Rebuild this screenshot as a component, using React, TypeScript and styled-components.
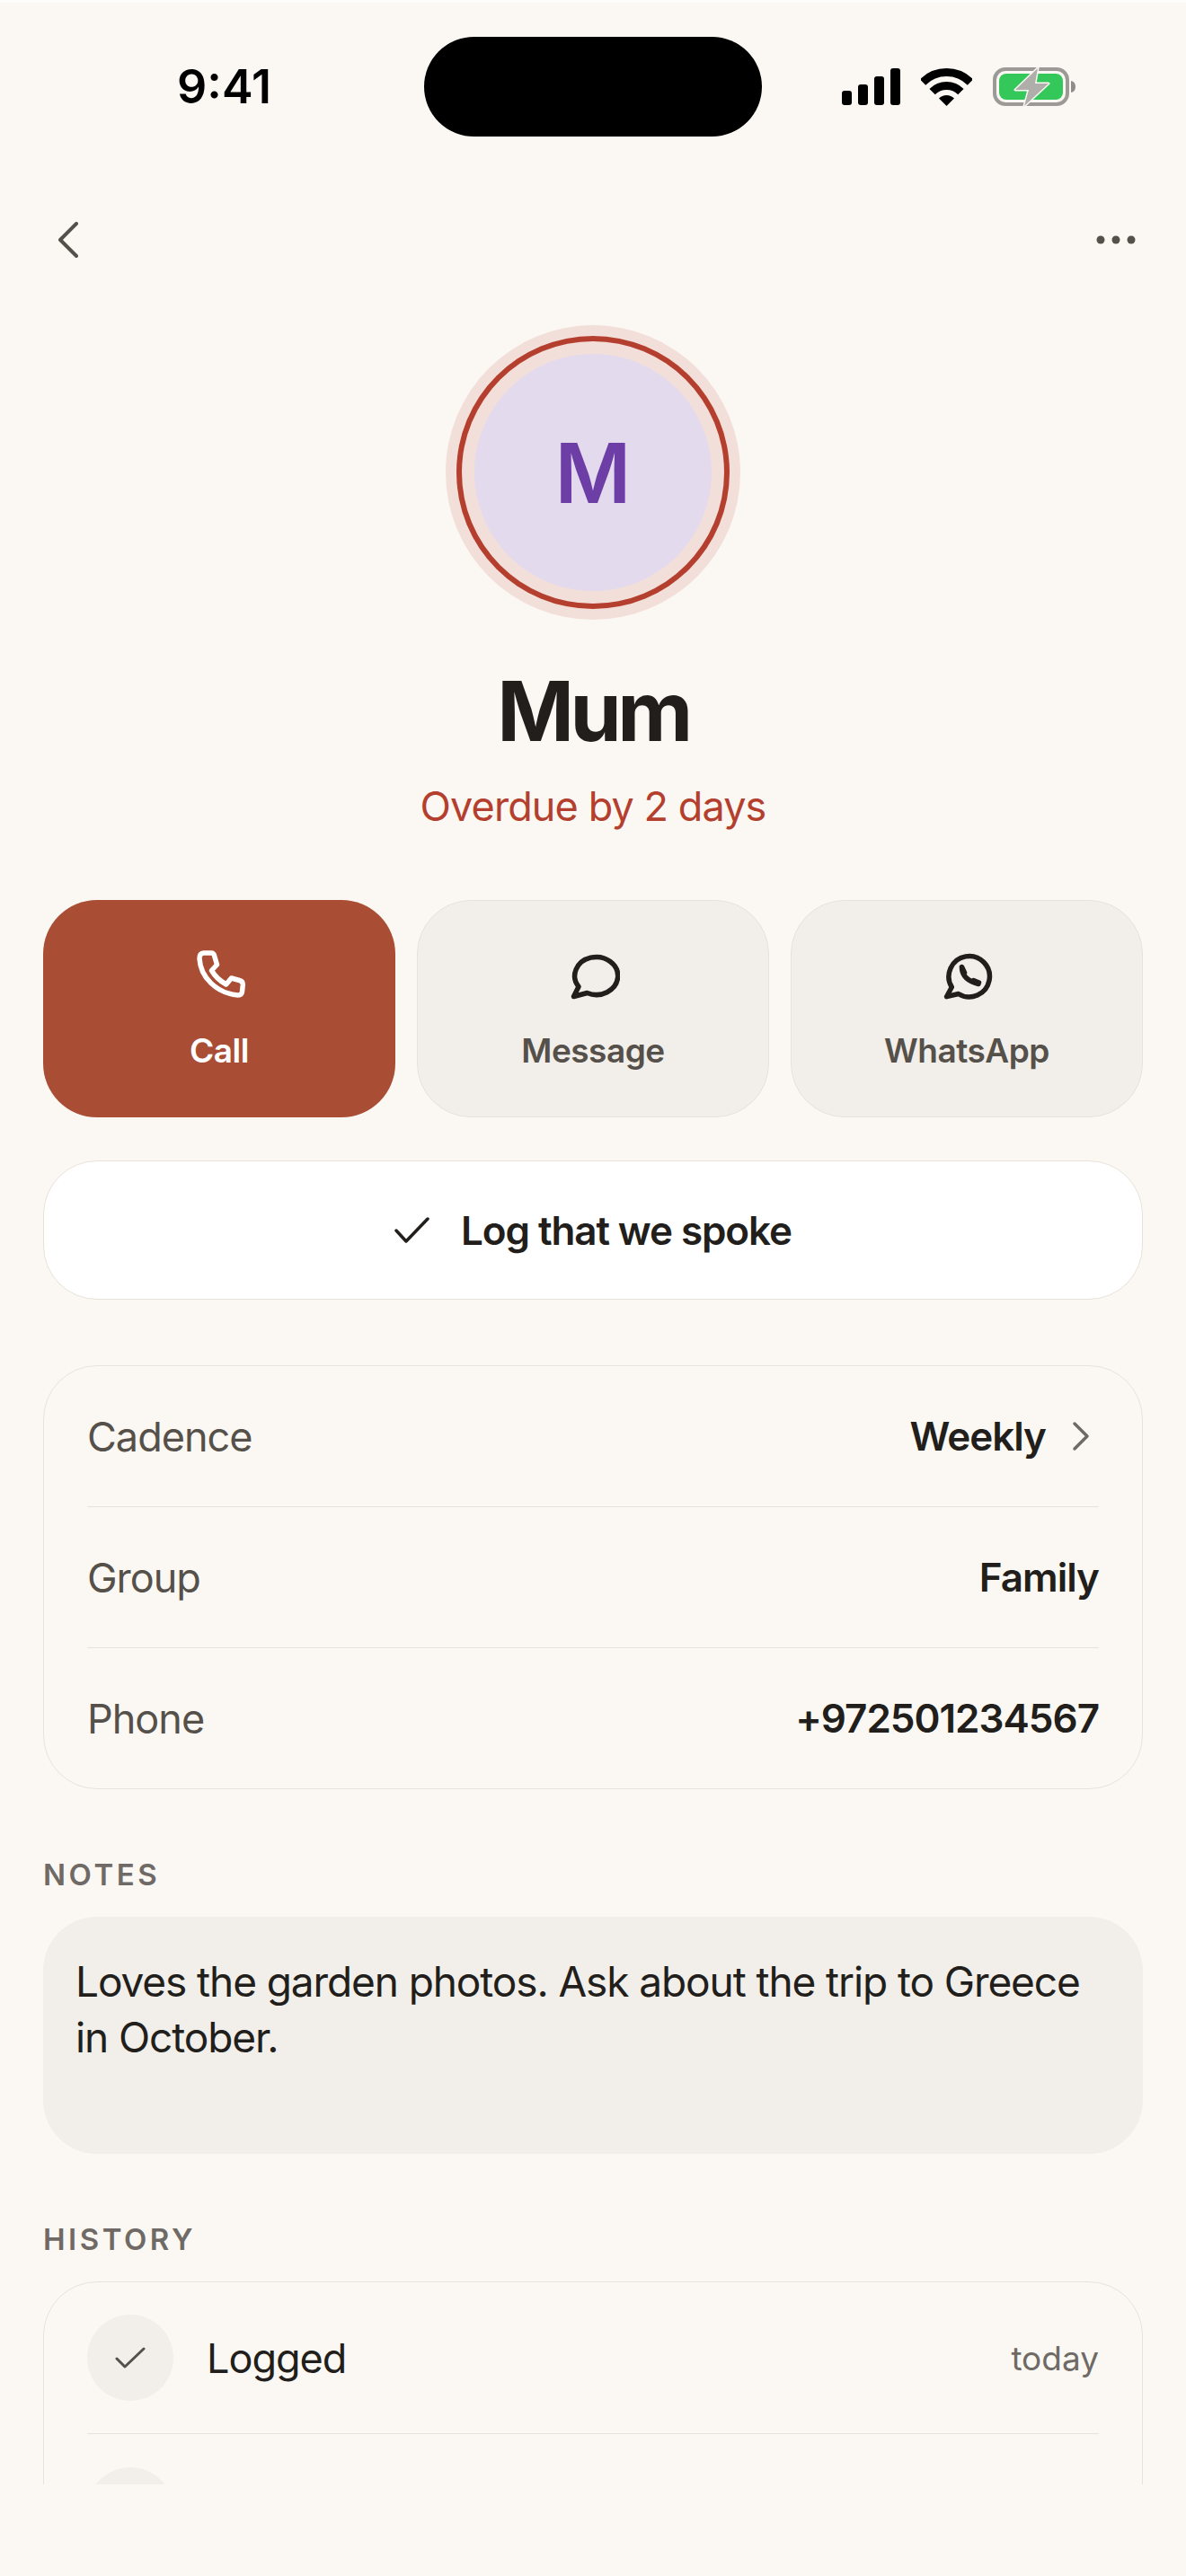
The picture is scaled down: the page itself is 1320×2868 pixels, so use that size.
import React from "react";
import styled, { createGlobalStyle } from "styled-components";

const GlobalStyle = createGlobalStyle`
  html, body {
    margin: 0;
    padding: 0;
    background: #fbf8f3;
  }
  * {
    box-sizing: border-box;
  }
`;

const colors = {
  ink: "#211e1b",
  soft: "#55504a",
  mute: "#6f6a65",
  line: "#e8e2da",
  fill: "#f2eee9",
  clay: "#a94e35",
  alert: "#b53f2e",
};

interface ActionProps {
  label: string;
  active?: boolean;
  children: React.ReactNode;
}

const Action = ({ label, active, children }: ActionProps): JSX.Element => (
  <ActionButton $active={active}>
    {children}
    <ActionLabel>{label}</ActionLabel>
  </ActionButton>
);

interface InfoRowProps {
  name: string;
  value: string;
  chevron?: boolean;
}

const InfoRow = ({ name, value, chevron }: InfoRowProps): JSX.Element => (
  <Row>
    <RowName>{name}</RowName>
    <RowValue>
      {value}
      {chevron && (
        <Chevron width="20" height="34" viewBox="0 0 20 34" fill="none">
          <polyline points="3,3 17,17 3,31" stroke={colors.mute} strokeWidth="3.5" strokeLinecap="round" strokeLinejoin="round" />
        </Chevron>
      )}
    </RowValue>
  </Row>
);

const App = (): JSX.Element => (
  <Page>
    <GlobalStyle />
    <Screen>
      <StatusBar>
        <Clock>9:41</Clock>
        <Island />
        <StatusIcons>
          <svg width="65" height="41" viewBox="0 0 65 41" fill="#000">
            <rect x="0" y="25" width="11" height="16" rx="3" />
            <rect x="18" y="18" width="11" height="23" rx="3" />
            <rect x="36" y="9" width="11" height="32" rx="3" />
            <rect x="54" y="0" width="11" height="41" rx="3" />
          </svg>
          <svg width="57" height="42" viewBox="0 0 57 42" fill="none">
            <path d="M2 15.5A37.5 37.5 0 0 1 55 15.5" stroke="#000" strokeWidth="9" />
            <path d="M12.6 26.1A22.5 22.5 0 0 1 44.4 26.1" stroke="#000" strokeWidth="9" />
            <path d="M28.5 42L20 33.5A12 12 0 0 1 37 33.5Z" fill="#000" />
          </svg>
          <svg width="92" height="44" viewBox="0 0 92 44" fill="none">
            <rect x="2" y="2" width="81" height="39" rx="12" stroke="#9c9a96" strokeWidth="4" />
            <rect x="7" y="7" width="71" height="29" rx="8" fill="#34c85a" />
            <path d="M87 15Q92 16 92 21.5Q92 27 87 28Z" fill="#8f8d89" />
            <path d="M50 1L25 25H40L35 43L62 18H47Z" fill="#b0aeaa" stroke="#fbf8f3" strokeWidth="3" strokeLinejoin="round" paintOrder="stroke" />
          </svg>
        </StatusIcons>
      </StatusBar>

      <Nav>
        <svg width="22" height="40" viewBox="0 0 22 40" fill="none">
          <polyline points="20,2 2,20 20,38" stroke={colors.soft} strokeWidth="4" strokeLinecap="round" strokeLinejoin="round" />
        </svg>
        <svg width="44" height="10" viewBox="0 0 44 10" fill={colors.soft}>
          <circle cx="5" cy="5" r="4.5" />
          <circle cx="22" cy="5" r="4.5" />
          <circle cx="39" cy="5" r="4.5" />
        </svg>
      </Nav>

      <Hero>
        <Avatar>M</Avatar>
        <Name>Mum</Name>
        <Overdue>Overdue by 2 days</Overdue>
      </Hero>

      <Body>
        <Actions>
          <Action label="Call" active>
            <svg width="60" height="60" viewBox="0 0 60 60" fill="none">
              <path d="M12.7 7H21Q24 7 24.7 10.5L27.5 20L21.5 26.5Q27 36 37.7 42L43.5 35L52.5 37.5Q56.5 38.5 56.3 42.5L55.5 50Q55 54 51 54C27 52 9 34 8 13Q8 7.5 12.7 7Z" stroke="#fff" strokeWidth="5.5" strokeLinejoin="round" />
            </svg>
          </Action>
          <Action label="Message">
            <svg width="60" height="60" viewBox="0 0 60 60" fill="none">
              <path d="M14 44.5A24 21 0 1 1 23.5 51.5L8.5 55.5Z" stroke={colors.ink} strokeWidth="5.5" strokeLinejoin="round" />
            </svg>
          </Action>
          <Action label="WhatsApp">
            <svg width="60" height="60" viewBox="0 0 60 60" fill="none">
              <path d="M13.3 45A22.7 22.7 0 1 1 20.7 52.5L7.5 55.7Z" stroke={colors.ink} strokeWidth="5.5" strokeLinejoin="round" />
              <path d="M24.5 22.5L27.5 29M24.5 24Q25.5 37 43 41.5M37.5 37.5L43.5 40" stroke={colors.ink} strokeWidth="5.5" strokeLinecap="round" />
            </svg>
          </Action>
        </Actions>

        <LogButton>
          <svg width="39" height="29" viewBox="0 0 39 29" fill="none">
            <polyline points="2,15 13,27 37,2" stroke={colors.ink} strokeWidth="3.5" strokeLinecap="round" strokeLinejoin="round" />
          </svg>
          Log that we spoke
        </LogButton>

        <Card $top={73}>
          <InfoRow name="Cadence" value="Weekly" chevron />
          <InfoRow name="Group" value="Family" />
          <InfoRow name="Phone" value="+972501234567" />
        </Card>

        <SectionLabel>NOTES</SectionLabel>
        <Notes>Loves the garden photos. Ask about the trip to Greece in October.</Notes>

        <SectionLabel>HISTORY</SectionLabel>
        <Card>
          <HistoryRow>
            <HistoryDot>
              <svg width="34" height="24" viewBox="0 0 34 24" fill="none">
                <polyline points="2,13 11,22 32,2" stroke={colors.soft} strokeWidth="3" strokeLinecap="round" strokeLinejoin="round" />
              </svg>
            </HistoryDot>
            <HistoryTitle>Logged</HistoryTitle>
            <HistoryWhen>today</HistoryWhen>
          </HistoryRow>
          <HistoryRow>
            <HistoryDot />
          </HistoryRow>
        </Card>
      </Body>
    </Screen>
  </Page>
);

const Page = styled.div`
  min-height: 2868px;
  background: #fbf8f3;
  border-top: 3px solid #fefdfc;
  font-family: Inter, "Liberation Sans", sans-serif;
  color: ${colors.ink};
`;

const Screen = styled.div`
  height: 2763px;
  overflow: hidden;
`;

const StatusBar = styled.div`
  display: grid;
  grid-template-columns: 1fr 376px 1fr;
  align-items: center;
  padding-top: 38px;
`;

const Clock = styled.div`
  font-size: 52px;
  font-weight: 600;
  line-height: 60px;
  color: #000;
  text-align: center;
  padding-left: 27px;
`;

const Island = styled.div`
  height: 111px;
  border-radius: 56px;
  background: #000;
`;

const StatusIcons = styled.div`
  display: flex;
  align-items: center;
  justify-content: flex-end;
  gap: 23px;
  padding-right: 123px;
`;

const Nav = styled.div`
  display: flex;
  align-items: center;
  justify-content: space-between;
  height: 60px;
  margin-top: 85px;
  padding: 0 56px 0 65px;
`;

const Hero = styled.div`
  display: flex;
  flex-direction: column;
  align-items: center;
  padding-top: 97px;
`;

const Avatar = styled.div`
  display: flex;
  align-items: center;
  justify-content: center;
  width: 264px;
  height: 264px;
  border-radius: 50%;
  background: #e3daee;
  box-shadow: 0 0 0 14px #f2dfda, 0 0 0 20px ${colors.alert}, 0 0 0 32px #f2dfda;
  color: #6d3fa6;
  font-size: 92px;
  font-weight: 600;
`;

const Name = styled.h1`
  margin: 76px 0 0;
  font-size: 92px;
  font-weight: 700;
  line-height: 116px;
  letter-spacing: -4.5px;
`;

const Overdue = styled.div`
  margin-top: 16px;
  font-size: 45px;
  line-height: 64px;
  letter-spacing: -0.9px;
  color: ${colors.alert};
`;

const Body = styled.div`
  display: flex;
  flex-direction: column;
  padding: 72px 48px 0;
`;

const Actions = styled.div`
  display: grid;
  grid-template-columns: repeat(3, 1fr);
  gap: 24px;
`;

const ActionButton = styled.div<{ $active?: boolean }>`
  display: flex;
  flex-direction: column;
  align-items: center;
  gap: 32px;
  height: 242px;
  padding-top: ${({ $active }) => ($active ? 52 : 51)}px;
  border-radius: 60px;
  border: ${({ $active }) => ($active ? "none" : `1px solid ${colors.line}`)};
  background: ${({ $active }) => ($active ? colors.clay : colors.fill)};
  color: ${({ $active }) => ($active ? "#fff" : colors.soft)};
`;

const ActionLabel = styled.span`
  font-size: 37px;
  font-weight: 600;
  line-height: 48px;
  letter-spacing: -0.5px;
`;

const LogButton = styled.div`
  display: flex;
  align-items: center;
  justify-content: center;
  gap: 35px;
  height: 155px;
  margin-top: 48px;
  border-radius: 60px;
  border: 1px solid ${colors.line};
  background: #fff;
  font-size: 44px;
  font-weight: 600;
  letter-spacing: -1.1px;
`;

const Card = styled.div<{ $top?: number }>`
  margin-top: ${({ $top }) => $top ?? 0}px;
  padding: 0 48px;
  border-radius: 60px;
  border: 1px solid ${colors.line};
`;

const Row = styled.div`
  display: flex;
  align-items: center;
  justify-content: space-between;
  height: 157px;
  border-bottom: 1px solid ${colors.line};

  &:last-child {
    height: 156px;
    border-bottom: none;
  }
`;

const RowName = styled.span`
  font-size: 45px;
  letter-spacing: -1px;
  color: ${colors.soft};
`;

const RowValue = styled.span`
  display: flex;
  align-items: center;
  gap: 29px;
  font-size: 44px;
  font-weight: 600;
  letter-spacing: -1px;
`;

const Chevron = styled.svg`
  margin-right: 10px;
`;

const SectionLabel = styled.div`
  margin: 73px 0 25px;
  font-size: 33px;
  font-weight: 600;
  line-height: 44px;
  letter-spacing: 3.5px;
  color: ${colors.mute};
`;

const Notes = styled.div`
  min-height: 264px;
  padding: 41px 48px 41px 36px;
  border-radius: 60px;
  background: ${colors.fill};
  font-size: 46px;
  line-height: 62px;
  letter-spacing: -1.1px;
`;

const HistoryRow = styled.div`
  display: flex;
  align-items: center;
  gap: 37px;
  height: 169px;
  border-bottom: 1px solid ${colors.line};

  &:last-child {
    border-bottom: none;
  }
`;

const HistoryDot = styled.div`
  display: flex;
  align-items: center;
  justify-content: center;
  width: 96px;
  height: 96px;
  border-radius: 50%;
  background: ${colors.fill};
`;

const HistoryTitle = styled.span`
  flex: 1;
  font-size: 45px;
  letter-spacing: -1px;
`;

const HistoryWhen = styled.span`
  font-size: 37px;
  color: ${colors.mute};
`;

export default App;
